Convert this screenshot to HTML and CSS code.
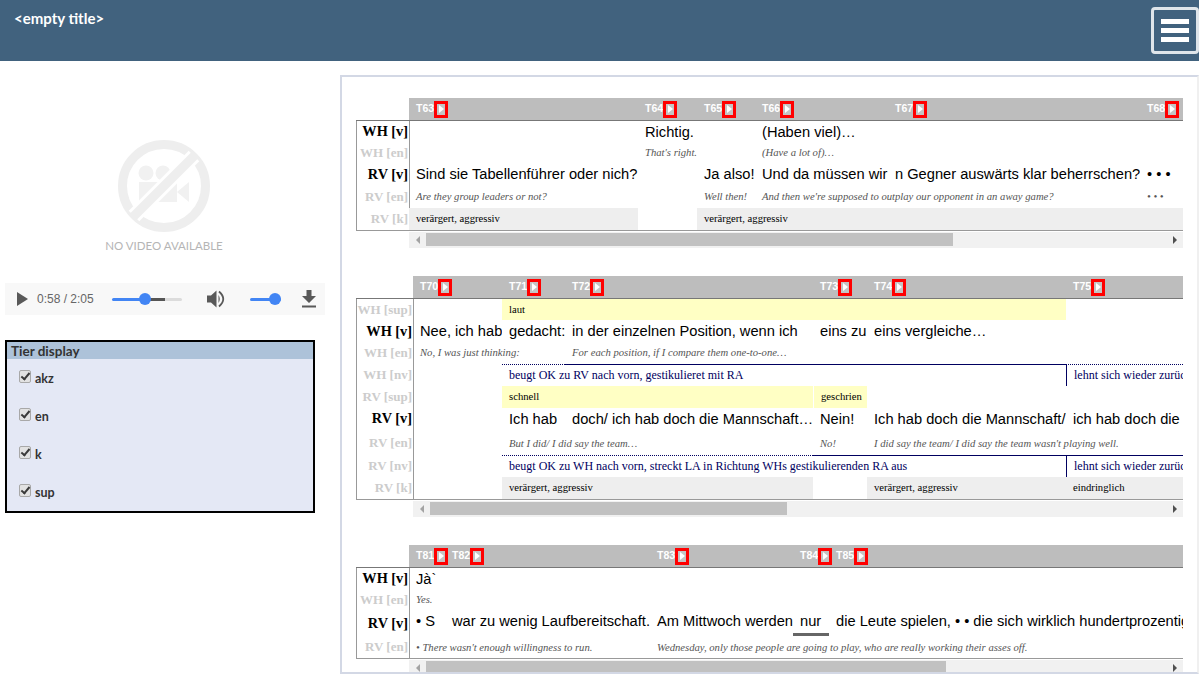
FILE: index.html
```html
<!DOCTYPE html>
<html lang="de">
<head>
    <meta charset="UTF-8">
    <title>transcript viewer</title>
    <meta name="viewport" content="width=device-width, initial-scale=1.0">

    <link rel="stylesheet" href="styles.css">
</head>
<body>

<div class="topbar">
    <div class="title">&lt;empty title&gt;</div>
    <button class="menuButton"><span></span><span></span><span></span></button>
</div>

<div class="page">
    <div class="side">
        <div class="noVideo">
            <svg width="92" height="92" viewBox="0 0 92 92">
                <circle cx="46" cy="46" r="41.5" fill="none" stroke="#eeeeee" stroke-width="9"/>
                <circle cx="28" cy="33" r="7.5" fill="#f1f1f1"/>
                <circle cx="45" cy="33" r="7.5" fill="#f1f1f1"/>
                <rect x="21" y="42" width="38" height="20" fill="#f1f1f1"/>
                <path d="M59 52 L71 42 L71 62 Z" fill="#f1f1f1"/>
                <line x1="16" y1="76" x2="76" y2="16" stroke="#ffffff" stroke-width="15"/>
                <line x1="14" y1="78" x2="78" y2="14" stroke="#eeeeee" stroke-width="9"/>
            </svg>
            <div class="noVideoText">NO VIDEO AVAILABLE</div>
        </div>

        <div class="player">
            <svg class="playIcon" width="11" height="14" viewBox="0 0 11 14"><path d="M0 0 L11 7 L0 14 Z" fill="#595959"/></svg>
            <span class="time">0:58 / 2:05</span>
            <div class="slider seek"><div class="thumb"></div></div>
            <svg class="volumeIcon" width="19" height="18" viewBox="0 0 19 18">
                <path d="M0 5.5 H4 L9.5 0.5 V17.5 L4 12.5 H0 Z" fill="#595959"/>
                <path d="M11.5 5 Q14 9 11.5 13 Z" fill="#595959"/>
                <path d="M12 1.5 Q20.5 9 12 16.5" fill="none" stroke="#595959" stroke-width="1.8"/>
            </svg>
            <div class="slider volume"><div class="thumb"></div></div>
            <svg class="downloadIcon" width="14" height="18" viewBox="0 0 14 18">
                <path d="M4.5 0 H9.5 V6 H14 L7 13 L0 6 H4.5 Z" fill="#595959"/>
                <rect x="0" y="15.5" width="14" height="2" fill="#595959"/>
            </svg>
        </div>

        <div class="tierBox">
            <div class="tierHead">Tier display</div>
            <label class="tierRow"><input type="checkbox" checked> akz</label>
            <label class="tierRow"><input type="checkbox" checked> en</label>
            <label class="tierRow"><input type="checkbox" checked> k</label>
            <label class="tierRow"><input type="checkbox" checked> sup</label>
        </div>
    </div>

    <div class="main">

        <div class="block">
            <table class="score">
                <colgroup><col class="labelCol"><col style="width:229px"><col style="width:59px"><col style="width:58px"><col style="width:133px"><col style="width:252px"><col style="width:43px"></colgroup>
                <tr class="head">
                    <th class="corner"></th>
                    <th>T63<i class="go"></i></th><th>T64<i class="go"></i></th><th>T65<i class="go"></i></th><th>T66<i class="go"></i></th><th>T67<i class="go"></i></th><th>T68<i class="go"></i></th>
                </tr>
                <tr class="h21"><td class="label main-tier">WH [v]</td><td></td><td class="v">Richtig.</td><td></td><td class="v" colspan="2">(Haben viel)…</td><td></td></tr>
                <tr class="h21"><td class="label">WH [en]</td><td></td><td class="en" colspan="2">That's right.</td><td class="en" colspan="2">(Have a lot of)…</td><td></td></tr>
                <tr class="h22"><td class="label main-tier">RV [v]</td><td class="v">Sind sie Tabellenführer oder nich?</td><td></td><td class="v">Ja also!</td><td class="v">Und da müssen wir</td><td class="v">n Gegner auswärts klar beherrschen?</td><td class="v">• • •</td></tr>
                <tr class="h23"><td class="label">RV [en]</td><td class="en">Are they group leaders or not?</td><td></td><td class="en">Well then!</td><td class="en" colspan="2">And then we're supposed to outplay our opponent in an away game?</td><td class="en">• • •</td></tr>
                <tr class="h23"><td class="label">RV [k]</td><td class="k fill">verärgert, aggressiv</td><td></td><td class="k fill" colspan="4">verärgert, aggressiv</td></tr>
            </table>
            <div class="scrollbar"><span class="arrow left"></span><div class="scrollThumb" style="width:527px"></div><span class="arrow right"></span></div>
        </div>

        <div class="block wide">
            <table class="score">
                <colgroup><col class="labelCol"><col style="width:89px"><col style="width:63px"><col style="width:248px"><col style="width:54px"><col style="width:199px"><col style="width:117px"></colgroup>
                <tr class="head">
                    <th class="corner"></th>
                    <th>T70<i class="go"></i></th><th>T71<i class="go"></i></th><th>T72<i class="go"></i></th><th>T73<i class="go"></i></th><th>T74<i class="go"></i></th><th>T75<i class="go"></i></th>
                </tr>
                <tr class="h21"><td class="label">WH [sup]</td><td></td><td class="k yellow" colspan="4">laut</td><td></td></tr>
                <tr class="h22"><td class="label main-tier">WH [v]</td><td class="v">Nee, ich hab</td><td class="v">gedacht:</td><td class="v">in der einzelnen Position, wenn ich</td><td class="v">eins zu</td><td class="v" colspan="2">eins vergleiche…</td></tr>
                <tr class="h22"><td class="label">WH [en]</td><td class="en" colspan="2">No, I was just thinking:</td><td class="en" colspan="4">For each position, if I compare them one-to-one…</td></tr>
                <tr class="rule"><td class="label"></td><td></td><td class="dotted"></td><td class="solid" colspan="3"></td><td class="dotted"></td></tr>
                <tr class="h21"><td class="label">WH [nv]</td><td></td><td class="nv" colspan="4">beugt OK zu RV nach vorn, gestikulieret mit RA</td><td class="nv cut">lehnt sich wieder zurück</td></tr>
                <tr class="h22"><td class="label">RV [sup]</td><td></td><td class="k yellow" colspan="2">schnell</td><td class="k yellow gap">geschrien</td><td></td><td></td></tr>
                <tr class="h23"><td class="label main-tier">RV [v]</td><td></td><td class="v">Ich hab</td><td class="v">doch/ ich hab doch die Mannschaft…</td><td class="v">Nein!</td><td class="v">Ich hab doch die Mannschaft/</td><td class="v">ich hab doch die</td></tr>
                <tr class="h24"><td class="label">RV [en]</td><td></td><td class="en" colspan="2">But I did/ I did say the team…</td><td class="en">No!</td><td class="en" colspan="2">I did say the team/ I did say the team wasn't playing well.</td></tr>
                <tr class="rule"><td class="label"></td><td></td><td class="dotted" colspan="2"></td><td class="solid" colspan="3"></td></tr>
                <tr class="h21"><td class="label">RV [nv]</td><td></td><td class="nv" colspan="4">beugt OK zu WH nach vorn, streckt LA in Richtung WHs gestikulierenden RA aus</td><td class="nv cut">lehnt sich wieder zurück</td></tr>
                <tr class="h23"><td class="label">RV [k]</td><td></td><td class="k fill" colspan="2">verärgert, aggressiv</td><td></td><td class="k fill">verärgert, aggressiv</td><td class="k fill">eindringlich</td></tr>
            </table>
            <div class="scrollbar"><span class="arrow left"></span><div class="scrollThumb" style="width:357px"></div><span class="arrow right"></span></div>
        </div>

        <div class="block">
            <table class="score">
                <colgroup><col class="labelCol"><col style="width:36px"><col style="width:205px"><col style="width:143px"><col style="width:36px"><col style="width:354px"></colgroup>
                <tr class="head">
                    <th class="corner"></th>
                    <th>T81<i class="go"></i></th><th>T82<i class="go"></i></th><th>T83<i class="go"></i></th><th>T84<i class="go"></i></th><th>T85<i class="go"></i></th>
                </tr>
                <tr class="h21"><td class="label main-tier">WH [v]</td><td class="v">Jà`</td><td></td><td></td><td></td><td></td></tr>
                <tr class="h21"><td class="label">WH [en]</td><td class="en">Yes.</td><td></td><td></td><td></td><td></td></tr>
                <tr class="h26"><td class="label main-tier">RV [v]</td><td class="v">• S</td><td class="v">war zu wenig Laufbereitschaft.</td><td class="v">Am Mittwoch werden</td><td class="v now">nur</td><td class="v">die Leute spielen, • • die sich wirklich hundertprozentig</td></tr>
                <tr class="h23 low"><td class="label">RV [en]</td><td class="en" colspan="2">• There wasn't enough willingness to run.</td><td class="en" colspan="3">Wednesday, only those people are going to play, who are really working their asses off.</td></tr>
            </table>
            <div class="scrollbar"><span class="arrow left"></span><div class="scrollThumb" style="width:520px"></div><span class="arrow right"></span></div>
        </div>

    </div>
</div>

</body>
</html>
```

FILE: styles.css
```css
html, body {
    margin: 0;
    height: 686px;
    overflow: hidden;
    background: white;
}

.topbar {
    height: 61px;
    background: #41627e;
    display: flex;
    justify-content: space-between;
    box-sizing: border-box;
    padding: 7px 0 0 14px;
}

.title {
    color: white;
    font: bold 15px Lato, sans-serif;
    margin-top: 2px;
}

.menuButton {
    width: 48px;
    height: 47px;
    box-sizing: border-box;
    background: #41627e;
    border: solid 3px #dfe5ea;
    border-radius: 4px;
    padding: 0;
    display: flex;
    flex-direction: column;
    align-items: center;
    justify-content: center;
    gap: 4px;
}

.menuButton span {
    width: 28px;
    height: 5px;
    background: white;
}

.page {
    display: flex;
    align-items: flex-start;
}

.side {
    width: 340px;
    flex: none;
}

.noVideo {
    margin-top: 79px;
    display: flex;
    flex-direction: column;
    align-items: center;
    padding-right: 12px;
}

.noVideoText {
    margin-top: 7px;
    font: 11.5px Lato, sans-serif;
    color: #b5b5b5;
}

.player {
    margin: 31px 0 0 5px;
    width: 320px;
    height: 32px;
    background: #f8f8f8;
    display: flex;
    align-items: center;
    font: 12px "Liberation Sans", sans-serif;
    color: #666666;
}

.playIcon {
    margin-left: 12px;
}

.time {
    margin-left: 9px;
    width: 57px;
    white-space: nowrap;
}

.slider {
    position: relative;
    height: 3px;
    border-radius: 2px;
}

.seek {
    margin-left: 18px;
    width: 70px;
    background: linear-gradient(90deg, #4285f4 0 33px, #555555 33px 53px, #dcdcdc 53px);
}

.volume {
    margin-left: 24px;
    width: 31px;
    background: #4285f4;
}

.thumb {
    position: absolute;
    top: -5px;
    width: 12px;
    height: 12px;
    border-radius: 50%;
    background: #4285f4;
}

.seek .thumb {
    left: 27px;
}

.volume .thumb {
    left: 19px;
}

.volumeIcon {
    margin-left: 25px;
}

.downloadIcon {
    margin-left: 21px;
}

.tierBox {
    margin: 25px 0 0 5px;
    width: 310px;
    box-sizing: border-box;
    border: solid 2px black;
    background: #e4e8f5;
    font: bold 12.5px Lato, sans-serif;
    color: #333333;
}

.tierHead {
    height: 17px;
    line-height: 18px;
    background: #adc2d9;
    padding-left: 4px;
    font-size: 13.5px;
    font-weight: bold;
}

.tierRow {
    height: 38px;
    display: flex;
    align-items: center;
    gap: 4px;
    padding-left: 12px;
}

.tierRow input {
    appearance: none;
    -webkit-appearance: none;
    position: relative;
    box-sizing: border-box;
    width: 12px;
    height: 13px;
    margin: 0 0 4px 0;
    background: #e2e2e2;
    border: solid 1px #a8a8a8;
    border-radius: 2px;
}

.tierRow input::after {
    content: "";
    position: absolute;
    left: 3px;
    top: 0px;
    width: 3px;
    height: 7px;
    border: solid #3a3a3a;
    border-width: 0 2px 2px 0;
    transform: rotate(40deg);
}

.main {
    flex: 1;
    height: 599px;
    margin-top: 14px;
    box-sizing: border-box;
    border: solid 2px #d3d8e5;
    border-right-color: #f0f0f0;
    border-bottom-width: 2px;
    padding: 21px 0 0 14px;
    overflow: hidden;
}

.block {
    margin-bottom: 28px;
    width: 827px;
}

.score {
    table-layout: fixed;
    width: 827px;
    border-collapse: separate;
    border-spacing: 0;
}

.labelCol {
    width: 53px;
}

.wide .labelCol {
    width: 57px;
}

.score th, .score td {
    padding: 0 0 0 7px;
    overflow: hidden;
    white-space: nowrap;
    text-align: left;
    box-sizing: border-box;
}

.score th {
    overflow: visible;
}

.head th {
    height: 23px;
    background: #bdbdbd;
    border-bottom: solid 1px #777777;
    color: white;
    font: bold 10.5px "Liberation Sans", sans-serif;
    vertical-align: middle;
}

.head th.corner {
    background: white;
    padding: 0;
}

.go {
    display: inline-block;
    position: relative;
    vertical-align: middle;
    box-sizing: border-box;
    width: 14px;
    height: 17px;
    border: solid 3px #ff0000;
    background: #c4c4c4;
}

.go::after {
    content: "";
    position: absolute;
    left: 2px;
    top: 1px;
    border-left: 5px solid white;
    border-top: 4px solid transparent;
    border-bottom: 4px solid transparent;
}

.h21 { height: 21px; }
.h22 { height: 22px; }
.h23 { height: 23px; }
.h24 { height: 24px; }
.h26 { height: 26px; }

.h26 td {
    padding-bottom: 4px;
}

.h26 td.now {
    padding-bottom: 1px;
    border-bottom: solid 3px #666666;
}

.score td.label {
    padding: 0 1px 0 0;
    text-align: right;
    font: bold 13px "Liberation Serif", serif;
    color: #cccccc;
    border-left: solid 1px #999999;
}

.score td.main-tier {
    color: black;
    font-size: 14.3px;
}

.score .h23 td.main-tier, .score .h23 td.v {
    padding-bottom: 2px;
}

.score .rule + tr td.label {
    padding-bottom: 2px;
}

.score tr:last-child td {
    border-bottom: solid 1px #999999;
}

.score td.label + td {
    box-shadow: inset 1px 0 0 #999999;
}

.score td.label + td.fill {
    box-shadow: none;
}

.v {
    font: 14.67px "Liberation Sans", sans-serif;
    color: black;
}

.en {
    font: italic 10.67px "Liberation Serif", serif;
    color: #555555;
}

.k {
    font: 10.67px "Liberation Serif", serif;
    color: black;
}

/* small serif tiers sit one pixel above the middle of their row */
.score td.en, .score td.k {
    padding-bottom: 2px;
}

.score .h24 td.en, .score .low td.en {
    padding-bottom: 0;
}

.nv {
    font: 12px "Liberation Serif", serif;
    color: #000060;
}

.cut {
    border-left: solid 1px #000060;
}

.fill {
    background: #eeeeee;
}

.yellow {
    background: #ffffc4;
}

.gap {
    border-left: solid 1px white;
}

.rule {
    height: 1px;
}

.score .rule td {
    height: 1px;
    padding: 0;
    font-size: 0;
    line-height: 0;
}

.dotted {
    background: repeating-linear-gradient(90deg, #000060 0 1px, transparent 1px 2px);
}

.solid {
    background: #000060;
}

.scrollbar {
    margin: 1px 0 0 53px;
    height: 16px;
    box-sizing: border-box;
    padding: 1px 0 2px;
    background: #f1f1f1;
    display: flex;
    align-items: stretch;
}

.wide .scrollbar {
    margin-left: 57px;
}

.scrollThumb {
    background: #c1c1c1;
}

.arrow {
    width: 17px;
    flex: none;
    display: flex;
    align-items: center;
    justify-content: center;
}

.arrow.right {
    margin-left: auto;
}

.arrow::before {
    content: "";
    border-top: 4px solid transparent;
    border-bottom: 4px solid transparent;
}

.arrow.left::before {
    border-right: 4px solid #a3a3a3;
}

.arrow.right::before {
    border-left: 4px solid #505050;
}
```
